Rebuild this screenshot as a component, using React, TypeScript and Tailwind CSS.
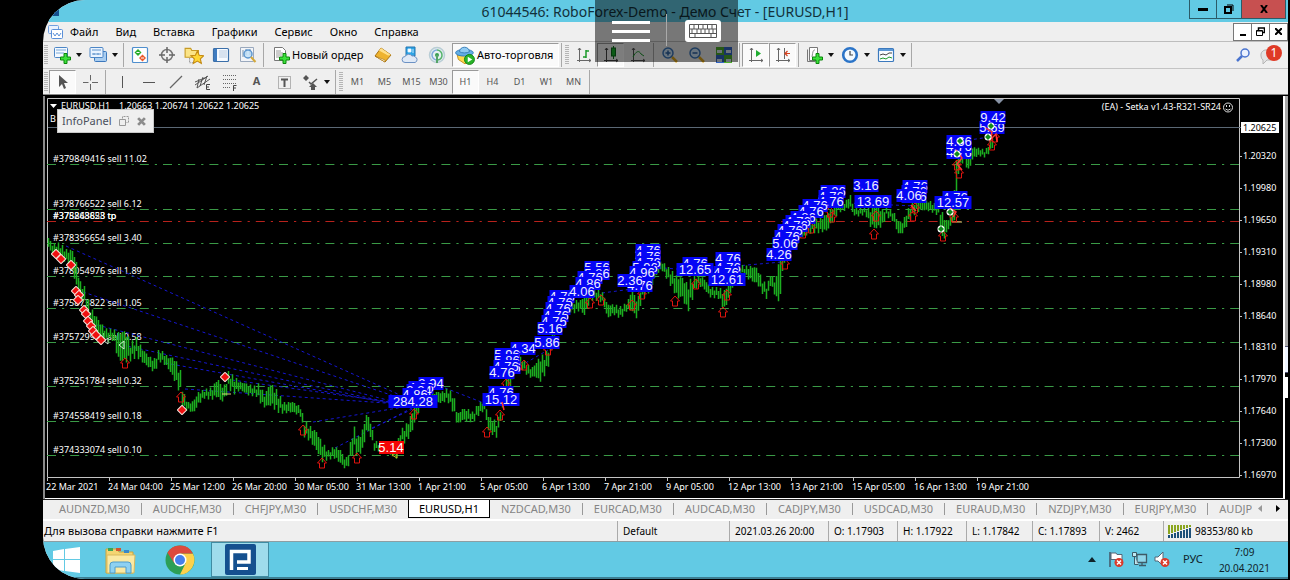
import type { ReactNode } from "react";

const menuItems = ["Файл", "Вид", "Вставка", "Графики", "Сервис", "Окно", "Справка"];

const timeframes = ["M1", "M5", "M15", "M30", "H1", "H4", "D1", "W1", "MN"];

const tabs = [
  "AUDNZD,M30",
  "AUDCHF,M30",
  "CHFJPY,M30",
  "USDCHF,M30",
  "EURUSD,H1",
  "NZDCAD,M30",
  "EURCAD,M30",
  "AUDCAD,M30",
  "CADJPY,M30",
  "USDCAD,M30",
  "EURAUD,M30",
  "NZDJPY,M30",
  "EURJPY,M30",
  "AUDJPY,M30",
];

const prices = [
  "1.20320",
  "1.19980",
  "1.19650",
  "1.19310",
  "1.18980",
  "1.18640",
  "1.18310",
  "1.17970",
  "1.17640",
  "1.17300",
  "1.16970",
];

const dates = [
  "22 Mar 2021",
  "24 Mar 04:00",
  "25 Mar 12:00",
  "26 Mar 20:00",
  "30 Mar 05:00",
  "31 Mar 13:00",
  "1 Apr 21:00",
  "5 Apr 05:00",
  "6 Apr 13:00",
  "7 Apr 21:00",
  "9 Apr 05:00",
  "12 Apr 13:00",
  "13 Apr 21:00",
  "15 Apr 05:00",
  "16 Apr 13:00",
  "19 Apr 21:00",
];

const orders = [
  { y: 164, label: "#379849416 sell 11.02" },
  { y: 209, label: "#378766522 sell 6.12" },
  { y: 243, label: "#378356654 sell 3.40" },
  { y: 276, label: "#378054976 sell 1.89" },
  { y: 308, label: "#375873822 sell 1.05" },
  { y: 342, label: "#375729984 sell 0.58" },
  { y: 386, label: "#375251784 sell 0.32" },
  { y: 421, label: "#374558419 sell 0.18" },
  { y: 455, label: "#374333074 sell 0.10" },
];

// x, high, low
const swings = [
  [48, 238, 247], [52, 244, 255], [56, 242, 258], [60, 243, 258], [66, 249, 262], [72, 250, 270],
  [76, 262, 287], [79, 280, 294], [84, 286, 304], [90, 306, 328], [98, 320, 340], [105, 328, 341],
  [113, 329, 340], [118, 332, 360], [126, 331, 361], [130, 342, 360], [136, 337, 356], [143, 350, 363],
  [148, 356, 367], [154, 358, 372], [159, 348, 361], [163, 352, 363], [169, 358, 370], [174, 357, 380],
  [180, 370, 393], [183, 392, 410], [188, 402, 410], [193, 401, 413], [198, 392, 404], [204, 389, 398],
  [212, 387, 399], [217, 378, 396], [221, 386, 402], [225, 384, 398], [228, 371, 388], [234, 376, 393],
  [240, 382, 390], [248, 384, 395], [256, 386, 396], [259, 382, 401], [264, 395, 407], [270, 383, 405],
  [277, 390, 411], [283, 402, 413], [292, 402, 412], [300, 406, 416], [304, 420, 436], [310, 426, 441],
  [316, 432, 450], [322, 442, 461], [328, 450, 459], [334, 446, 458], [340, 450, 463], [345, 460, 469],
  [349, 448, 464], [353, 424, 450], [358, 436, 456], [363, 428, 448], [366, 414, 430], [370, 420, 436],
  [374, 440, 450], [384, 445, 452], [392, 446, 456], [396, 446, 458], [400, 430, 445], [407, 422, 440],
  [412, 412, 430], [416, 400, 415], [424, 394, 404], [436, 392, 402], [441, 392, 403], [447, 388, 400],
  [453, 393, 412], [457, 414, 425], [462, 409, 420], [468, 409, 421], [473, 412, 422], [478, 402, 415],
  [484, 402, 410], [488, 416, 430], [493, 419, 435], [497, 421, 437], [500, 408, 420], [504, 385, 402],
  [509, 370, 390], [515, 355, 370], [521, 357, 368], [527, 364, 375], [531, 368, 378], [535, 364, 376],
  [539, 357, 382], [547, 350, 370], [552, 330, 345], [558, 308, 325], [565, 300, 308], [572, 300, 313],
  [580, 300, 310], [584, 296, 315], [590, 288, 300], [597, 289, 300], [603, 293, 303], [607, 305, 318],
  [613, 304, 314], [620, 306, 318], [627, 302, 310], [631, 290, 310], [637, 300, 319], [641, 283, 300],
  [650, 274, 290], [655, 264, 276], [661, 261, 269], [665, 264, 276], [672, 271, 288], [677, 276, 298],
  [682, 278, 297], [687, 283, 312], [692, 276, 298], [697, 274, 285], [703, 278, 288], [710, 287, 297],
  [718, 287, 298], [724, 290, 310], [730, 278, 293], [736, 266, 276], [742, 265, 275], [750, 266, 280],
  [757, 268, 284], [762, 279, 293], [767, 285, 299], [770, 272, 285], [775, 282, 296], [779, 258, 303],
  [783, 250, 264], [790, 240, 250], [800, 228, 238], [812, 220, 232], [820, 217, 232], [827, 214, 230],
  [833, 204, 220], [838, 204, 212], [845, 201, 210], [850, 195, 207], [853, 208, 215], [858, 208, 216],
  [865, 207, 214], [870, 208, 226], [876, 204, 228], [882, 209, 226], [886, 207, 216], [893, 211, 221],
  [898, 221, 234], [902, 222, 233], [906, 212, 226], [911, 202, 217], [916, 199, 212], [922, 200, 210],
  [930, 201, 211], [938, 205, 215], [942, 212, 242], [947, 222, 231], [952, 213, 222], [955, 165, 216],
  [958, 150, 172], [963, 149, 160], [968, 155, 171], [973, 147, 157], [980, 148, 156], [985, 150, 157],
  [990, 140, 151], [994, 132, 144],
];

const bars: [number, number, number][] = [];
for (let i = 0; i < swings.length - 1; i++) {
  const [x0, h0, l0] = swings[i];
  const [x1, h1, l1] = swings[i + 1];
  for (let x = x0 % 2 ? x0 + 1 : x0; x < x1; x += 2) {
    const t = (x - x0) / (x1 - x0);
    const high = h0 + (h1 - h0) * t;
    const low = l0 + (l1 - l0) * t;
    const wobble = Math.sin(x * 1.7) * 0.18 * (low - high);
    bars.push([x + 0.5, high + Math.abs(wobble) + wobble, low + wobble - Math.abs(wobble) / 2]);
  }
}

const profits: [string, number, number][] = [
  ["2.94", 431, 384], ["4.86", 421, 388], ["3.24", 419, 391], ["4.86", 415, 395], ["284.28", 413, 402],
  ["4.76", 501, 393], ["15.12", 501, 400],
  ["4.34", 523, 349], ["5.96", 507, 355], ["5.86", 507, 361], ["4.86", 508, 368], ["4.76", 506, 367], ["4.76", 502, 373],
  ["4.76", 562, 297], ["4.76", 560, 303], ["4.76", 558, 309], ["4.76", 556, 316], ["4.76", 554, 322], ["5.16", 550, 329],
  ["5.86", 547, 343],
  ["5.56", 597, 268], ["5.86", 597, 274], ["4.76", 590, 278], ["4.86", 588, 284], ["4.06", 582, 292],
  ["4.76", 648, 251], ["4.76", 648, 257], ["4.76", 648, 263], ["5.96", 645, 268], ["4.96", 642, 273],
  ["4.76", 640, 286], ["2.36", 630, 281],
  ["4.76", 695, 264], ["12.65", 695, 270],
  ["4.76", 728, 259], ["4.76", 728, 268], ["4.76", 726, 273], ["12.61", 727, 280],
  ["5.26", 833, 192], ["4.76", 831, 197], ["4.76", 831, 202],
  ["4.76", 815, 206], ["4.76", 811, 212], ["4.86", 803, 218],
  ["4.76", 798, 222], ["4.76", 795, 226], ["4.76", 790, 231], ["4.76", 787, 237], ["5.06", 785, 244], ["4.26", 779, 255],
  ["3.16", 866, 186], ["13.69", 873, 202],
  ["4.76", 915, 187], ["4.76", 914, 192], ["4.76", 914, 197], ["4.06", 909, 196],
  ["4.76", 955, 198], ["12.57", 953, 203],
  ["4.76", 959, 153], ["4.76", 959, 147], ["4.66", 959, 142],
  ["5.69", 992, 128], ["9.42", 993, 118],
];

const arrows = [
  [125, 358], [181, 392], [303, 425], [322, 458], [357, 453], [414, 409], [487, 427], [500, 410],
  [524, 360], [506, 379], [548, 345], [590, 298], [601, 295], [632, 300], [642, 289], [675, 296],
  [696, 279], [723, 307], [727, 290], [785, 259], [803, 228], [811, 223], [832, 212], [830, 207],
  [874, 229], [876, 211], [913, 211], [915, 203], [943, 231], [954, 212], [959, 168], [957, 160],
  [963, 146], [992, 140], [995, 132],
];

const sells = [
  [56, 254], [61, 259], [71, 265], [76, 291], [79, 295], [78, 300], [84, 310], [86, 314],
  [88, 321], [91, 326], [93, 331], [96, 335], [101, 340], [182, 410], [225, 377],
];

const closes = [[960, 141], [957, 154], [941, 229], [950, 212], [991, 126], [988, 137]];

const trades = [
  "M66 246 L400 395", "M83 292 L400 398", "M97 325 L395 402", "M122 345 L392 403", "M165 363 L390 403",
  "M185 389 L400 404", "M232 380 L390 402", "M313 422 L410 406", "M372 428 L415 408", "M335 448 L412 408",
  "M445 388 L484 403", "M510 372 L548 350", "M602 293 L640 288", "M664 268 L712 272", "M736 266 L782 262",
  "M848 203 L915 206", "M962 141 L990 137",
];

function Svg({ size = 18, children }: { size?: number; children: ReactNode }) {
  return (
    <svg width={size} height={size} viewBox="0 0 18 18" fill="none" aria-hidden="true">
      {children}
    </svg>
  );
}

const Plus = ({ x = 7, y = 7 }) => (
  <path
    transform={`translate(${x} ${y})`}
    d="M4 .5h3V4h3.500v3H7v3.500H4V7H.5V4H4z"
    fill="#3be03b"
    stroke="#0b870b"
  />
);

const icons = {
  newChart: (
    <Svg>
      <rect x="1.500" y="1.500" width="13" height="10" rx="1" fill="#f4f9ff" stroke="#4c86c6" />
      <path d="M3 4h10M3 7h8" stroke="#7ba9d8" />
      <Plus />
    </Svg>
  ),
  profiles: (
    <Svg>
      <rect x="5.500" y="5.500" width="12" height="10" rx="1" fill="#a9cdf0" stroke="#3c78bd" />
      <rect x="1" y="1.500" width="13" height="10" rx="1" fill="#e9f3ff" stroke="#4c86c6" />
      <path d="M3 4h9M3 8h9M5 7v2M9 7v2" stroke="#5f93cb" />
    </Svg>
  ),
  market: (
    <Svg>
      <rect x="1.500" y="1.500" width="15" height="15" rx="1" fill="#fdfeff" stroke="#4f8fce" strokeWidth="1.200" />
      <path d="M7 3l3.500 3.500L7 10 3.500 6.500z" fill="#27ab2a" />
      <path d="M11.500 8.500L15 12l-3.500 3.500L8 12z" fill="#ea5a2c" />
      <path d="M5.500 6.500h3M10 12h3" stroke="#fff" />
    </Svg>
  ),
  crosshair: (
    <Svg>
      <circle cx="9" cy="9" r="5.500" stroke="#777" strokeWidth="1.500" />
      <path d="M9 1v6M9 11v6M1 9h6M11 9h6" stroke="#666" strokeWidth="1.500" />
    </Svg>
  ),
  navigator: (
    <Svg size={20}>
      <path d="M1 3h5l1 2h6v6H1z" fill="#fbe487" stroke="#c79a25" />
      <path d="M5 12v4h4" stroke="#888" strokeDasharray="1 1" />
      <path d="M12 5.500l1.700 3.800 4 .4-3 2.800.9 4.100-3.600-2.100-3.600 2.100.9-4.100-3-2.800 4-.4z" fill="#ffd735" stroke="#c48a12" />
    </Svg>
  ),
  dataWindow: (
    <Svg>
      <rect x="1.500" y="2.500" width="15" height="13" rx="1" fill="#f6faff" stroke="#3b6fa9" strokeWidth="1.200" />
      <path d="M2 3h3v12H2z" fill="#3f7cc0" />
      <path d="M7 5h8M7 7h8M7 9h8M7 11h8" stroke="#b9cbe0" />
    </Svg>
  ),
  tester: (
    <Svg>
      <path d="M1.500 1.500h13v14h-13z" fill="#f2f4f8" stroke="#9aa9bd" />
      <path d="M4 4v7M7 3v6M11 3v6" stroke="#7b93ab" />
      <circle cx="9" cy="8" r="4" fill="#bfe0f8" fillOpacity=".8" stroke="#5c96cf" strokeWidth="1.500" />
      <path d="M12 11l4.500 5" stroke="#d5a93a" strokeWidth="2" />
    </Svg>
  ),
  order: (
    <Svg>
      <path d="M2.500 1.500h8l3 3v10h-11z" fill="#fff" stroke="#777" />
      <path d="M4 5h5M4 7h7M4 9h6M4 11h3" stroke="#9a9a9a" />
      <Plus />
    </Svg>
  ),
  editor: (
    <Svg>
      <path d="M1 10L7 2l10 7-6 7z" fill="#eeb32f" stroke="#a97312" />
      <path d="M7 2l10 7-3 .5-9-5z" fill="#ffe08a" />
      <path d="M1 10l10 4v2z" fill="#fff4cf" stroke="#a97312" strokeWidth=".6" />
    </Svg>
  ),
  cloud: (
    <Svg>
      <path d="M5 1h9v9H5z" fill="#2ea5e6" stroke="#2375b0" />
      <path d="M7 3h3v3H7zM11 4h2M11 6h2" fill="#fff" stroke="#e4f4ff" strokeWidth=".8" />
      <path d="M4 16.500a3 3 0 01.2-6A4 4 0 0111 10a3 3 0 013 .8 3 3 0 010 5.700z" fill="#dfe9f6" stroke="#6d92c4" />
    </Svg>
  ),
  signals: (
    <Svg>
      <circle cx="9" cy="9" r="7.500" fill="#e6eff2" stroke="#b9cdd5" strokeWidth="1.500" />
      <path d="M9 4a5 5 0 015 5 5 5 0 01-4 5" stroke="#56b36b" strokeWidth="1.500" />
      <path d="M9 14a5 5 0 01-5-5 5 5 0 015-5" stroke="#7fa9dc" strokeWidth="1.500" />
      <circle cx="9" cy="9" r="2" fill="#3a9f52" />
      <path d="M9 9v8" stroke="#56a468" strokeWidth="2" />
    </Svg>
  ),
  auto: (
    <Svg size={20}>
      <path d="M2 9h12l2 3-7 5-6-4z" fill="#ffd84c" stroke="#bd8a19" strokeWidth=".8" />
      <ellipse cx="8.500" cy="7" rx="8" ry="3" fill="#62aee4" stroke="#2e78b3" strokeWidth=".8" />
      <path d="M4 6a4.500 4 0 019 0c-2 1.500-7 1.500-9 0z" fill="#8fcaf2" stroke="#2e78b3" strokeWidth=".8" />
      <circle cx="13" cy="13" r="4.500" fill="#29b329" stroke="#0d800d" strokeWidth=".8" />
      <path d="M11.500 10.500l4 2.500-4 2.500z" fill="#fff" />
    </Svg>
  ),
  barChart: (
    <Svg>
      <path d="M4.500 2v14M2 14.500h14M3 4l1.500-2L6 4M14 13l2 1.500-2 1.500" stroke="#666" />
      <path d="M11 4v8M11 5h3M8 11h3" stroke="#1b9a2b" strokeWidth="1.500" />
    </Svg>
  ),
  candles: (
    <Svg>
      <path d="M4.500 2v14M2 14.500h14M3 4l1.500-2L6 4M14 13l2 1.500-2 1.500" stroke="#444" />
      <path d="M11.500 0v13" stroke="#0a7a1a" />
      <rect x="9.500" y="2" width="4" height="8" fill="#18b52d" stroke="#0a6a18" />
    </Svg>
  ),
  lineChart: (
    <Svg>
      <path d="M4.500 2v14M2 14.500h14M3 4l1.500-2L6 4M14 13l2 1.500-2 1.500" stroke="#555" />
      <path d="M4 11c3-6 6-7 8-3l3 2" stroke="#1b9a2b" />
    </Svg>
  ),
  zoomIn: (
    <Svg>
      <path d="M11 11l5 5" stroke="#e0a81f" strokeWidth="2.500" />
      <circle cx="7" cy="7" r="5" fill="#cfe6fa" stroke="#3c78bd" strokeWidth="1.500" />
      <path d="M4.500 7h5M7 4.500v5" stroke="#2b62a6" strokeWidth="1.500" />
    </Svg>
  ),
  zoomOut: (
    <Svg>
      <path d="M11 11l5 5" stroke="#e0a81f" strokeWidth="2.500" />
      <circle cx="7" cy="7" r="5" fill="#cfe6fa" stroke="#3c78bd" strokeWidth="1.500" />
      <path d="M4.500 7h5" stroke="#2b62a6" strokeWidth="1.500" />
    </Svg>
  ),
  tile: (
    <Svg>
      <path d="M1 1h8v8H1zM9 9h8v8H9z" fill="#4fae2c" />
      <path d="M9 1h8v8H9zM1 9h8v8H1z" fill="#3164c8" />
      <path d="M2 4h5v3H2zM11 4h5v3h-5zM2 13h5v3H2zM11 13h5v3h-5z" fill="#dbe8f5" />
    </Svg>
  ),
  scroll: (
    <Svg>
      <path d="M4.500 2v14M2 14.500h14M3 4l1.500-2L6 4M14 13l2 1.500-2 1.500" stroke="#666" />
      <path d="M9 4v7l5-3.500z" fill="#20ad31" />
    </Svg>
  ),
  shift: (
    <Svg>
      <path d="M4.500 2v14M2 14.500h14M3 4l1.500-2L6 4M14 13l2 1.500-2 1.500M10.500 2v11" stroke="#666" />
      <path d="M16 7.500h-5M13.500 5L11 7.500l2.500 2.500" stroke="#d4411e" strokeWidth="1.200" />
    </Svg>
  ),
  indicators: (
    <Svg>
      <path d="M4.500 1.500h8v13h-8z" fill="#fff" stroke="#777" />
      <path d="M2.500 3.500v12h8" stroke="#777" />
      <path d="M7 11c1-6 1-7 3-7" stroke="#888" />
      <Plus />
    </Svg>
  ),
  clock: (
    <Svg>
      <circle cx="9" cy="9" r="6.800" fill="#f4faff" stroke="#2b74c8" strokeWidth="2.600" />
      <path d="M9 5v4h3" stroke="#444" strokeWidth="1.200" />
    </Svg>
  ),
  template: (
    <Svg>
      <rect x="1.500" y="2.500" width="15" height="13" rx="1" fill="#fafdff" stroke="#3b79bd" strokeWidth="1.200" />
      <path d="M2 3h14v2H2z" fill="#5b98d6" />
      <path d="M3 9l3-1 3 1 3-2h3" stroke="#444" />
      <path d="M3 13l3-1 3 1 3-2 3 1" stroke="#1b9a2b" />
    </Svg>
  ),
  pointer: (
    <Svg>
      <path d="M5 2v12l3-3 2 5 2-1-2-5h4z" fill="#555" />
    </Svg>
  ),
  cross: (
    <Svg>
      <path d="M9.500 2v5.500M9.500 11v6M2 9.500h5.500M11 9.500h6" stroke="#666" />
    </Svg>
  ),
  vline: (
    <Svg>
      <path d="M9.500 3v12" stroke="#555" />
    </Svg>
  ),
  hline: (
    <Svg>
      <path d="M3 9.500h12" stroke="#555" />
    </Svg>
  ),
  trend: (
    <Svg>
      <path d="M3 15L15 3" stroke="#666" strokeWidth="1.200" />
    </Svg>
  ),
  channel: (
    <Svg>
      <path d="M1 12L14 3M3 15l13-9M5 6l-2 9M9 4L6 13M13 3l-3 9M1 9l12-5" stroke="#555" />
      <path d="M16 11.500h-3.500v5H16M12.500 14H15" stroke="#444" />
    </Svg>
  ),
  fibo: (
    <Svg>
      <path d="M2 2.500h14M2 6.500h14M2 10.500h14M2 14.500h8" stroke="#666" strokeDasharray="1 1" />
      <path d="M15.500 12.500h-3V18M12.500 15H15" stroke="#444" />
    </Svg>
  ),
  label: (
    <Svg>
      <path d="M3.500 3.500h12v12h-12z" stroke="#777" strokeDasharray="1 1" />
      <path d="M6 6.500h7M9.500 6v8" stroke="#555" strokeWidth="2" />
    </Svg>
  ),
  shapes: (
    <Svg>
      <path d="M5 2l3 3-3 3-3-3zM12 10l4 4h-2v3h-4v-3H8z" fill="#555" />
      <path d="M8 9l2 2 6-5" stroke="#555" strokeWidth="1.500" />
    </Svg>
  ),
};

const Caret = () => (
  <svg width="6" height="4" viewBox="0 0 6 4" aria-hidden="true">
    <path d="M0 0h6L3 4z" fill="#111" />
  </svg>
);

const Grip = () => (
  <div className="mx-px h-5 w-1 shrink-0 bg-[repeating-linear-gradient(#b5b5b5_0_1px,#efefef_1px_2px)]" />
);

const Separator = () => <div className="mx-0.5 h-6 w-px shrink-0 bg-[#a8a8a8]" />;

type ToolProps = { name: string; children: ReactNode; pressed?: boolean; menu?: boolean };

function Tool({ name, children, pressed, menu }: ToolProps) {
  const width = menu ? "w-9 gap-[5px]" : "w-[27px]";
  const look = pressed
    ? "border-t-[#9a9a9a] border-r-white border-b-white border-l-[#9a9a9a] bg-[#fafafa]"
    : "border-transparent";
  return (
    <button
      aria-label={name}
      className={`flex h-6 shrink-0 items-center justify-center border text-[#555] ${width} ${look}`}
    >
      {children}
      {menu && <Caret />}
    </button>
  );
}

function TitleBar() {
  return (
    <header className="flex h-[22px] items-start bg-[#62cae4]">
      <div className="ml-1 mt-2 h-2 w-3 bg-[#15508f]" />
      <h1 className="flex-1 pl-[82px] text-center text-[14px] leading-6 whitespace-nowrap text-[#12313b]">
        61044546: RoboForex-Demo - Демо Счет - [EURUSD,H1]
      </h1>
      <div className="mr-0.5 flex h-[19px] border border-t-0 border-[#2b5b68] text-black">
        <button aria-label="Свернуть" className="flex w-[26px] items-center justify-center">
          <span className="h-[3px] w-2.5 bg-black" />
        </button>
        <button
          aria-label="Развернуть"
          className="flex w-[25px] items-center justify-center border-l border-[#2b5b68]"
        >
          <svg width="10" height="10" viewBox="0 0 10 10" fill="none" stroke="#000">
            <path d="M3 1h6v6" />
            <path d="M1 3h6v6H1z" strokeWidth="2" />
          </svg>
        </button>
        <button
          aria-label="Закрыть"
          className="flex w-11 items-center justify-center border-l border-[#2b5b68] bg-[#c75050]"
        >
          <svg width="8" height="8" viewBox="0 0 8 8" stroke="#000" strokeWidth="2">
            <path d="M1 0l6 8M7 0L1 8" />
          </svg>
        </button>
      </div>
    </header>
  );
}

function MenuBar() {
  return (
    <nav className="flex h-5 items-center border-b border-[#bdbdbd] pl-[5px]">
      <svg width="15" height="14" viewBox="0 0 15 14" fill="none" aria-hidden="true">
        <rect x=".5" y=".5" width="10" height="8" rx="1" fill="#e9f1ff" stroke="#6f9fe0" />
        <rect x="3.500" y="4.500" width="11" height="9" rx="1" fill="#fff" stroke="#5a8fd8" />
        <path d="M5 8l2 3 2-3 2 3 2-3" stroke="#5a8fd8" />
      </svg>
      <div className="flex flex-1 gap-[17px] pl-[7px] text-[11px] leading-4">
        {menuItems.map((item) => (
          <button key={item}>{item}</button>
        ))}
      </div>
      <div className="flex h-[18px] divide-x divide-[#777] border border-[#777] bg-white">
        <button aria-label="Свернуть окно" className="flex w-[18px] items-end justify-center pb-1">
          <span className="h-0.5 w-1.5 bg-black" />
        </button>
        <button aria-label="Восстановить окно" className="flex w-[18px] items-center justify-center">
          <svg width="9" height="9" viewBox="0 0 9 9" fill="none" stroke="#000">
            <path d="M2.500 3V1h6v4.500H7" strokeWidth="1.500" />
            <path d="M.5 8.500v-5h6v5zM.5 4h6" />
          </svg>
        </button>
        <button aria-label="Закрыть окно" className="flex w-[17px] items-center justify-center">
          <svg width="7" height="7" viewBox="0 0 7 7" stroke="#000" strokeWidth="2">
            <path d="M0 0l7 7M7 0L0 7" />
          </svg>
        </button>
      </div>
    </nav>
  );
}

function MainToolbar() {
  return (
    <div className="flex h-[27px] items-center border-b border-[#c4c4c4]">
      <Grip />
      <Tool name="Новый график" menu>{icons.newChart}</Tool>
      <Tool name="Профили" menu>{icons.profiles}</Tool>
      <Separator />
      <Tool name="Обзор рынка">{icons.market}</Tool>
      <Tool name="Окно данных">{icons.crosshair}</Tool>
      <Tool name="Навигатор">{icons.navigator}</Tool>
      <Tool name="Терминал">{icons.dataWindow}</Tool>
      <Tool name="Тестер стратегий">{icons.tester}</Tool>
      <Separator />
      <button className="ml-1 flex h-6 w-[99px] shrink-0 items-center gap-0.5 pl-0.5 text-[11px] whitespace-nowrap">
        {icons.order}
        Новый ордер
      </button>
      <Tool name="MetaEditor">{icons.editor}</Tool>
      <Tool name="MQL5">{icons.cloud}</Tool>
      <Tool name="Сигналы">{icons.signals}</Tool>
      <button className="ml-0.5 flex h-6 w-[107px] shrink-0 items-center gap-0.5 border border-[#9a9a9a] border-r-white border-b-white bg-[#fafafa] pl-0.5 text-[11px] whitespace-nowrap">
        {icons.auto}
        Авто-торговля
      </button>
      <Separator />
      <Grip />
      <Tool name="Бары">{icons.barChart}</Tool>
      <Tool name="Свечи" pressed>{icons.candles}</Tool>
      <Tool name="Линия">{icons.lineChart}</Tool>
      <Separator />
      <Tool name="Увеличить">{icons.zoomIn}</Tool>
      <Tool name="Уменьшить">{icons.zoomOut}</Tool>
      <Tool name="Расположить окна">{icons.tile}</Tool>
      <Separator />
      <Tool name="Автопрокрутка" pressed>{icons.scroll}</Tool>
      <Tool name="Сдвиг графика" pressed>{icons.shift}</Tool>
      <Separator />
      <Tool name="Индикаторы" menu>{icons.indicators}</Tool>
      <Tool name="Периоды" menu>{icons.clock}</Tool>
      <Tool name="Шаблоны" menu>{icons.template}</Tool>
      <Separator />
      <div className="ml-auto flex items-center gap-2.5 pr-1.5">
        <button aria-label="Поиск">
          <svg width="14" height="14" viewBox="0 0 14 14" fill="none" stroke="#4a74cf">
            <circle cx="9" cy="5" r="4" strokeWidth="1.500" fill="#eaf1ff" />
            <path d="M6 8l-5 5" strokeWidth="2.500" />
          </svg>
        </button>
        <button aria-label="Уведомления" className="flex">
          <svg width="22" height="20" viewBox="0 0 22 20">
            <path d="M1 11a5 5 0 0110-2v6H7l-4 4v-4a5 5 0 01-2-4z" fill="#e4e4e4" stroke="#b5b5b5" />
            <circle cx="14" cy="8" r="8" fill="#df3a26" />
            <text x="14" y="12" fill="#fff" fontSize="12" textAnchor="middle">
              1
            </text>
          </svg>
        </button>
      </div>
    </div>
  );
}

function DrawToolbar() {
  return (
    <div className="flex h-[25px] items-center">
      <Grip />
      <Tool name="Курсор" pressed>{icons.pointer}</Tool>
      <Tool name="Перекрестие">{icons.cross}</Tool>
      <Separator />
      <Tool name="Вертикальная линия">{icons.vline}</Tool>
      <Tool name="Горизонтальная линия">{icons.hline}</Tool>
      <Tool name="Трендовая линия">{icons.trend}</Tool>
      <Tool name="Канал">{icons.channel}</Tool>
      <Tool name="Фибоначчи">{icons.fibo}</Tool>
      <Tool name="Текст">
        <span className="text-[11px] font-bold">A</span>
      </Tool>
      <Tool name="Метка">{icons.label}</Tool>
      <Tool name="Стрелки" menu>{icons.shapes}</Tool>
      <Separator />
      <Grip />
      {timeframes.map((tf) => (
        <Tool key={tf} name={tf} pressed={tf === "H1"}>
          <span className="text-[9px]">{tf}</span>
        </Tool>
      ))}
      <Separator />
    </div>
  );
}

function Chart() {
  return (
    <svg viewBox="45 96 1238 402" className="block h-auto w-full bg-black" fontSize="9" fill="#fff">
      {/* frame and axes */}
      <path d="M47.500 477.500V98.500H1239.500V477.500z" fill="none" stroke="#c4c4c4" />
      {prices.map((price, i) => (
        <g key={price}>
          <path d={`M1239 ${156.5 + Math.round(i * 31.9)}h3`} stroke="#c4c4c4" />
          <text x="1243" y={159 + Math.round(i * 31.9)}>{price}</text>
        </g>
      ))}
      {dates.map((date, i) => (
        <g key={date}>
          <path d={`M${47.5 + i * 62} 478v3`} stroke="#c4c4c4" />
          <text x={46 + i * 62} y="490">{date}</text>
        </g>
      ))}

      <path d="M48 127.500H1242" stroke="#5b6875" />
      <path d="M994 99h10l-5 5z" fill="#8893a5" />

      {/* open orders */}
      {orders.map(({ y, label }) => (
        <g key={label}>
          <path d={`M47 ${y + 0.5}H1239`} stroke="#3a9a46" strokeWidth="1.200" strokeDasharray="9 6 2.200 6" />
          <text x="53" y={y - 2}>{label}</text>
        </g>
      ))}
      <path d="M47 221.500H1239" stroke="#b8221c" strokeWidth="1.200" strokeDasharray="9 6 2.200 6" />
      <text x="53" y="219">#378263628 tp</text>
      <text x="53" y="219">#375848853 tp</text>

      {trades.map((d) => (
        <path key={d} d={d} stroke="#1616d0" strokeDasharray="3 3" />
      ))}

      <path d={bars.map(([x, high, low]) => `M${x} ${high}V${low}`).join("")} stroke="#1cae20" strokeWidth="1.500" />
      <path d="M222 394h9M952 222h10" stroke="#d8d878" />
      <path d="M392 455l5-3v6z" fill="none" stroke="#c8b820" />
      <path d="M119 345l5-4v8zM104 341l4-3v6z" fill="none" stroke="#cfe8cf" />

      {arrows.map(([x, y]) => (
        <path
          key={`${x}-${y}`}
          d={`M${x} ${y}l4.500 5h-2v5h-5v-5h-2z`}
          fill="none"
          stroke="#e0140f"
        />
      ))}

      {sells.map(([x, y]) => (
        <path
          key={`${x}-${y}`}
          d={`M${x} ${y - 4}l4 4-4 4-4-4z`}
          fill="#f01010"
          stroke="#fbe4dc"
          strokeWidth="2"
          strokeLinejoin="round"
          paintOrder="stroke"
        />
      ))}

      {/* profit of each closed deal */}
      {profits.map(([text, x, y], i) => {
        const width = text.length * 12 - 23;
        return (
          <g key={i} fontFamily="Liberation Sans, sans-serif" fontSize="13">
            <rect x={x - width / 2} y={y - 7} width={width} height="13" fill="#0505f5" />
            <text x={x} y={y + 4} textAnchor="middle" fill="#eef">{text}</text>
          </g>
        );
      })}
      <g fontFamily="Liberation Sans, sans-serif" fontSize="13">
        <rect x="379" y="441" width="25" height="13" fill="#f50505" />
        <text x="391" y="452" textAnchor="middle" fill="#fff">5.14</text>
      </g>

      <path
        d="M956 150l6 8-5 6 5 6M986 128l6 4-2 8 6-6 1 8M950 208l6 4-3 5M911 205l5 6M502 402l2 8"
        fill="none"
        stroke="#f33"
        strokeWidth="1.500"
      />
      {closes.map(([x, y]) => (
        <g key={x}>
          <circle cx={x} cy={y} r="3.500" fill="#fff" />
          <path d={`M${x} ${y - 3}l3 3-3 3-3-3z`} fill="#0f8a1c" />
        </g>
      ))}

      {/* captions */}
      <path d="M50 104h7l-3.500 4z" />
      <text x="61" y="109">EURUSD,H1</text>
      <text x="119" y="109">1.20663 1.20674 1.20622 1.20625</text>
      <text x="50" y="122">B</text>
      <text x="1221" y="110" textAnchor="end">(EA) - Setka v1.43-R321-SR24</text>
      <g fill="none" stroke="#ddd">
        <circle cx="1228" cy="107.500" r="4.500" />
        <path d="M1225.500 109q2.500 2.500 5 0M1226.500 105v2M1229.500 105v2" />
      </g>
      <rect x="1241" y="122" width="38" height="11" fill="#fff" />
      <text x="1243" y="131" fill="#000">1.20625</text>
    </svg>
  );
}

function ChartWindow() {
  return (
    <main className="relative flex border-t border-[#8a8a8a] bg-black pt-px">
      <div className="w-0.5 shrink-0 bg-[#8a8a8a]" />
      <div className="min-w-0 flex-1 border-b border-white">
        <Chart />
      </div>
      <div className="w-0.5 shrink-0 bg-white" />
      <div className="flex w-[3px] shrink-0 flex-col">
        <div className="h-[250px] bg-[#a9a9a9]" />
        <div className="h-[27px] border-y border-[#557] bg-[#eef4ff]" />
        <div className="h-[25px] border-t-4 border-black bg-white" />
        <div className="flex-1 bg-black" />
      </div>
      <div className="absolute top-[14px] left-3.5 flex h-6 w-[97px] items-center border border-[#c8c8c8] bg-[#efefef] pl-1 text-[#4a4f5c]">
        <span className="w-[55px] text-[11px]">InfoPanel</span>
        <button aria-label="Открепить" className="ml-0.5">
          <svg width="10" height="10" viewBox="0 0 10 10" fill="none" stroke="#999">
            <path d="M3.500 2.500v-2h6v6h-2" strokeDasharray="2 1" />
            <path d="M.5 3.500h6v6h-6z" />
          </svg>
        </button>
        <button aria-label="Закрыть панель" className="ml-2">
          <svg width="9" height="9" viewBox="0 0 8 8" stroke="#8c8c8c" strokeWidth="2.500">
            <path d="M1 1l6 6M7 1L1 7" />
          </svg>
        </button>
      </div>
    </main>
  );
}

function ChartTabs() {
  return (
    <div className="flex h-5 items-start border-t border-[#222] text-[11px] leading-4 text-[#858585]">
      <div role="tablist" className="flex min-w-0 flex-1 overflow-hidden pl-[5px]">
        {tabs.map((tab) =>
          tab === "EURUSD,H1" ? (
            <button
              key={tab}
              role="tab"
              aria-selected="true"
              className="-ml-px h-[18px] shrink-0 border-x border-b border-black bg-white px-2.5 text-black"
            >
              {tab}
            </button>
          ) : (
            <button key={tab} role="tab" aria-selected="false" className="flex shrink-0 items-center">
              <span className="px-[11px]">{tab}</span>
              <span className="h-3 w-px bg-[#999]" />
            </button>
          )
        )}
      </div>
      <div className="flex h-4 items-center gap-3.5 pr-2 pl-1.5">
        <button aria-label="Назад">
          <svg width="4" height="7" viewBox="0 0 4 7">
            <path d="M4 0v7L0 3.500z" fill="#999" />
          </svg>
        </button>
        <button aria-label="Вперед">
          <svg width="4" height="7" viewBox="0 0 4 7">
            <path d="M0 0v7l4-3.500z" fill="#000" />
          </svg>
        </button>
      </div>
    </div>
  );
}

function StatusBar() {
  const cells = [
    { text: "Default", width: "w-28" },
    { text: "2021.03.26 20:00", width: "w-[99px]" },
    { text: "O: 1.17903", width: "w-[69px]" },
    { text: "H: 1.17922", width: "w-[69px]" },
    { text: "L: 1.17842", width: "w-[66px]" },
    { text: "C: 1.17893", width: "w-[67px]" },
    { text: "V: 2462", width: "w-16" },
  ];
  return (
    <footer className="flex h-[22px] items-center border-t-2 border-white text-[10px] leading-5">
      <span className="flex-1 pl-px text-[11px]">Для вызова справки нажмите F1</span>
      {cells.map(({ text, width }) => (
        <span key={text} className={`shrink-0 border-l border-[#aaa] pl-[5px] whitespace-nowrap ${width}`}>
          {text}
        </span>
      ))}
      <span className="flex w-[125px] shrink-0 items-center gap-1 border-l border-[#aaa] pl-1">
        <svg width="23" height="13" viewBox="0 0 23 13" aria-hidden="true">
          {Array.from({ length: 8 }).map((_, i) => (
            <g key={i}>
              <rect x={i * 3} y="0" width="2" height={9 - i} fill="#8aa51f" />
              <rect x={i * 3} y={10 - i} width="2" height={3 + i} fill="#1d5078" />
            </g>
          ))}
        </svg>
        98353/80 kb
      </span>
    </footer>
  );
}

function Taskbar() {
  return (
    <div className="flex h-[38px] items-center border-t border-b-2 border-t-[#8c9ea3] border-b-[#3d7f93] bg-[#62cae4] text-[#10242b]">
      <button aria-label="Пуск" className="ml-2.5">
        <svg width="27" height="26" viewBox="0 0 27 26" fill="#fff">
          <path d="M0 4l11-2v10H0zM12 2l15-2v12H12zM0 13h11v11L0 22zM12 13h15v13l-15-2z" />
        </svg>
      </button>
      <button aria-label="Проводник" className="ml-[25px]">
        <svg width="32" height="28" viewBox="0 0 32 28">
          <path d="M1 3h11l2 3h14v21H1z" fill="#f4d572" stroke="#c9a43d" />
          <path d="M3 2h5v3H3z" fill="#3aa655" />
          <path d="M11 2h5v3h-5z" fill="#d2542f" />
          <path d="M19 4h5v3h-5z" fill="#3a88c8" />
          <path d="M2 9h28l-1 18H2z" fill="#fbe9a3" stroke="#d9b95c" />
          <path d="M5 27v-8q0-3 3-3h15q3 0 3 3v8h-5v-6H10v6z" fill="#8ed1f2" stroke="#4f9ccb" />
        </svg>
      </button>
      <button aria-label="Google Chrome" className="ml-7">
        <svg width="30" height="30" viewBox="0 0 30 30">
          <circle cx="15" cy="15" r="14.500" fill="#2c9f56" />
          <path d="M15 8.500h12.900a14.500 14.500 0 01-12.900 21l5.600-11.200z" fill="#fdd14b" />
          <path d="M9.400 18.200L2.440 7.750A14.500 14.500 0 0127.900 8.500H15z" fill="#dc4a3d" />
          <circle cx="15" cy="15" r="6.500" fill="#fff" />
          <circle cx="15" cy="15" r="5" fill="#4680ec" />
        </svg>
      </button>
      <button
        aria-label="RoboForex"
        className="ml-4 flex h-full w-[58px] items-center justify-center border border-[#3f8ca3] bg-[#9fdcec]"
      >
        <svg width="31" height="31" viewBox="0 0 31 31" fill="none">
          <rect width="31" height="31" rx="2" fill="#15508f" />
          <path d="M6.500 26V7.500h17.500V18H12" stroke="#fff" strokeWidth="3.500" />
          <path d="M12 24.500h11" stroke="#fff" strokeWidth="3" />
        </svg>
      </button>
      <div className="ml-auto flex items-center pr-[18px] text-[11px]">
        <button aria-label="Скрытые значки">
          <svg width="8" height="5" viewBox="0 0 8 5">
            <path d="M0 5h8L4 0z" fill="#10242b" />
          </svg>
        </button>
        <div className="flex gap-[6px] pl-3">
          <svg width="17" height="17" viewBox="0 0 17 17">
            <path d="M2 1v15" stroke="#456" strokeWidth="1.500" />
            <path d="M3 2h5l1 1.500h5V10H9L8 8.500H3z" fill="#fff" stroke="#567" />
            <circle cx="11" cy="11.500" r="4.500" fill="#d93a2b" />
            <path d="M9 9.500l4 4M13 9.500l-4 4" stroke="#fff" strokeWidth="1.500" />
          </svg>
          <svg width="17" height="17" viewBox="0 0 17 17" fill="none">
            <path d="M6 3.500h9.500v8H6zM8 14.500h7M11 12v2" fill="#8fd6ea" stroke="#3e5a66" strokeWidth="1.300" />
            <path d="M1.500 1.500h4v4h-4zM3.500 5.500v8h4" fill="#fff" fillOpacity=".6" stroke="#3e5a66" />
          </svg>
          <svg width="17" height="17" viewBox="0 0 17 17">
            <path d="M1 6h3l5-5v14l-5-5H1z" fill="#fff" stroke="#567" />
            <circle cx="11" cy="11.500" r="4.500" fill="#d93a2b" />
            <path d="M9 9.500l4 4M13 9.500l-4 4" stroke="#fff" strokeWidth="1.500" />
          </svg>
        </div>
        <button className="ml-3">РУС</button>
        <div className="ml-4 text-center text-[10px] leading-4">
          <div>7:09</div>
          <div>20.04.2021</div>
        </div>
      </div>
    </div>
  );
}

function RemoteControls() {
  return (
    <div className="absolute top-0 left-[552px] flex h-[62px] w-[143px] items-end bg-black/50">
      <button aria-label="Меню" className="flex h-full flex-1 flex-col items-center justify-center gap-[6px]">
        <span className="h-[3px] w-[38px] bg-white" />
        <span className="h-[3px] w-[38px] bg-white" />
        <span className="h-[3px] w-[38px] bg-white" />
      </button>
      <div className="mb-4 h-8 w-px bg-[#aaa]" />
      <button aria-label="Клавиатура" className="flex h-full flex-1 items-center justify-center">
        <svg width="36" height="22" viewBox="0 0 36 22" fill="none">
          <rect width="36" height="22" rx="3" fill="#fff" />
          <path
            d="M4.500 4.500h27v13h-27zM4.500 9h27M4.500 13.500h27M9 4.500V9M13.500 4.500V9M18 4.500V9M22.500 4.500V9M27 4.500V9M7 9v4.500M12 9v4.500M16 9v4.500M20 9v4.500M24 9v4.500M28 9v4.500M10 13.500v4M26 13.500v4"
            stroke="#555"
          />
        </svg>
      </button>
    </div>
  );
}

export default function App() {
  return (
    <div className="min-h-screen bg-black pr-0.5 pl-[43px] font-['Noto_Sans',sans-serif] text-black">
      <div className="relative overflow-hidden rounded-l-[42px] bg-[#efefef]">
        <TitleBar />
        <MenuBar />
        <MainToolbar />
        <DrawToolbar />
        <ChartWindow />
        <ChartTabs />
        <StatusBar />
        <Taskbar />
        <RemoteControls />
      </div>
    </div>
  );
}
